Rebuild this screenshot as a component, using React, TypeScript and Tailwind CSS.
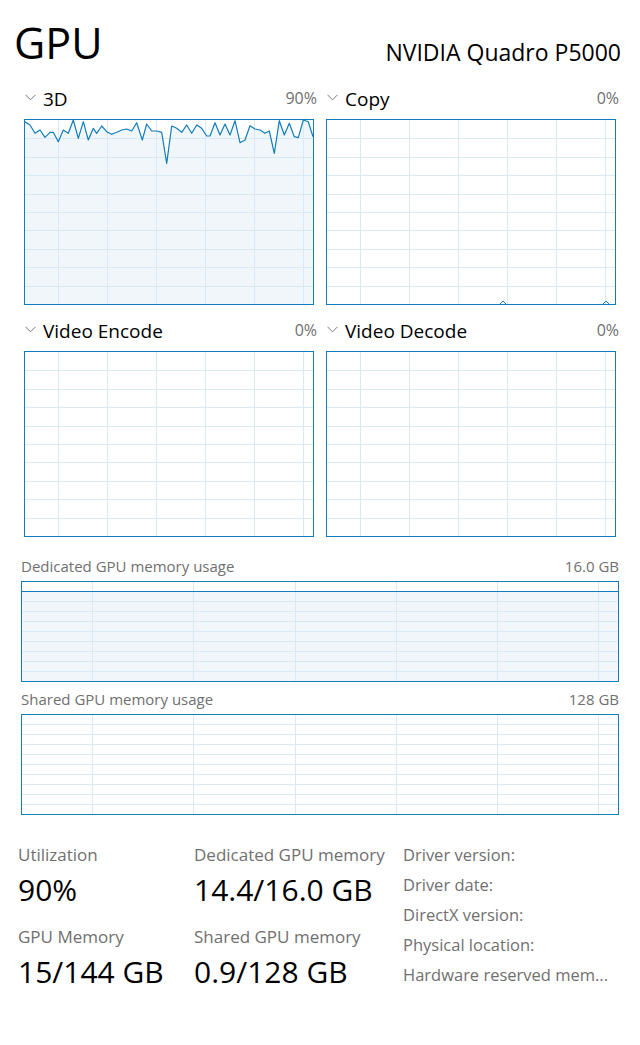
import React from "react";

const BLUE = "#117dbb";
const GRID = "#d9eaf4";
const FILL = "#f1f6fa";

const pts3d: [number, number][] = [
  [0, 1.7], [5, 5], [10, 13.3], [15, 10], [20, 17.3], [25, 12.3], [28.3, 12.3], [33.3, 21.7],
  [38.3, 10], [43.3, 13.3], [48.3, 0], [53.3, 18.3], [58.3, 1.7], [63.3, 20], [68.3, 8.3],
  [71.7, 13.3], [76.7, 6], [81.7, 11.7], [86.7, 14.3], [91.7, 12.3], [96.7, 10], [101.7, 9],
  [106.7, 11], [111.7, 2.7], [117.3, 20], [121.7, 4], [126.7, 11], [131.7, 11], [136.7, 12.3],
  [141.7, 43.3], [146.7, 6], [151.7, 8.3], [156.7, 12.3], [161.7, 5], [166.7, 13.3], [171.7, 5],
  [176.7, 8.3], [181.7, 16], [185, 16], [190, 2.7], [195, 15], [200, 4], [205, 15], [210, 0.7],
  [215, 22.7], [220, 20], [225, 5.7], [230, 9], [235, 10], [240, 13.3], [244.3, 11], [249.3, 33.3],
  [254.3, 0.7], [259.3, 15], [264.3, 3.3], [269.3, 16.7], [273.3, 17.7], [278.3, 0], [283.3, 1.7],
  [288, 16.7],
];

function Chevron() {
  return (
    <svg width="11" height="7" viewBox="0 0 11 7" className="shrink-0 -mt-[3px]">
      <path d="M0.5 0.8 L5.5 5.8 L10.5 0.8" fill="none" stroke="#777" strokeWidth="1" />
    </svg>
  );
}

function EngineChart({ line, blips }: { line?: [number, number][]; blips?: number[] }) {
  const w = 288;
  const h = 184;
  const vx = [33, 82, 131, 180, 229, 278];
  const hy = Array.from({ length: 9 }, (_, i) => Math.round((h * (i + 1)) / 10) + 0.5);
  const poly = line ? line.map(([x, y]) => `${x},${y}`).join(" ") : "";
  return (
    <div className="ml-[2px] w-[290px] h-[186px] border border-[#117dbb] bg-white">
      <svg width={w} height={h} className="block">
        {line && <polygon points={`0,${h} ${poly} ${w},${h}`} fill={FILL} />}
        {vx.map((x) => (
          <line key={x} x1={x + 0.5} x2={x + 0.5} y1={0} y2={h} stroke={GRID} />
        ))}
        {hy.map((y) => (
          <line key={y} x1={0} x2={w} y1={y} y2={y} stroke={GRID} />
        ))}
        {line && <polyline points={poly} fill="none" stroke={BLUE} strokeWidth="1.2" strokeLinejoin="round" />}
        {blips?.map((x) => (
          <path key={x} d={`M${x - 3} ${h} L${x} ${h - 3} L${x + 3} ${h}`} fill="none" stroke={BLUE} strokeWidth="1" />
        ))}
      </svg>
    </div>
  );
}

function Engine({ name, pct, line, blips }: { name: string; pct: string; line?: [number, number][]; blips?: number[] }) {
  return (
    <div className="flex flex-col">
      <div className="flex items-center h-[20px] pl-[3px] pr-[1px]">
        <Chevron />
        <span className="ml-[7px] text-[19px] leading-[20px] text-black">{name}</span>
        <span className="ml-auto text-[16px] leading-[20px] text-[#707070] -mt-[3px]">{pct}</span>
      </div>
      <div className="mt-[10px]">
        <EngineChart line={line} blips={blips} />
      </div>
    </div>
  );
}

function MemoryChart({ used }: { used?: boolean }) {
  const w = 596;
  const h = 99;
  const vx = [70, 171, 273, 374, 475, 576];
  const hy = Array.from({ length: 9 }, (_, i) => 9 + i * 10 + 0.5);
  return (
    <div className="w-[598px] h-[101px] border border-[#117dbb] bg-white">
      <svg width={w} height={h} className="block">
        {used && <rect x={0} y={9} width={w} height={h - 9} fill={FILL} />}
        {vx.map((x) => (
          <line key={x} x1={x + 0.5} x2={x + 0.5} y1={0} y2={h} stroke={GRID} />
        ))}
        {hy.map((y, i) => (
          <line key={y} x1={0} x2={w} y1={y} y2={y} stroke={used && i === 0 ? BLUE : GRID} />
        ))}
      </svg>
    </div>
  );
}

function MemorySection({ label, total, used }: { label: string; total: string; used?: boolean }) {
  return (
    <div className="pl-[21px] w-[619px]">
      <div className="flex items-center justify-between h-[18px] text-[15px] leading-[18px] text-[#707070]">
        <span>{label}</span>
        <span>{total}</span>
      </div>
      <div className="mt-[6px]">
        <MemoryChart used={used} />
      </div>
    </div>
  );
}

function Stat({ label, value }: { label: string; value: string }) {
  return (
    <div className="flex flex-col">
      <div className="text-[17px] leading-[20px] text-[#707070] whitespace-nowrap">{label}</div>
      <div className="mt-[7px] text-[30px] leading-[36px] text-black whitespace-nowrap">{value}</div>
    </div>
  );
}

export default function App() {
  const info = ["Driver version:", "Driver date:", "DirectX version:", "Physical location:", "Hardware reserved mem..."];
  return (
    <div className="w-[640px] h-[1045px] bg-white font-['Open_Sans',sans-serif] overflow-hidden">
      <header className="flex items-start justify-between pt-[21px] pl-[14px] pr-[19px]">
        <h1 className="text-[43px] leading-[44px] text-black">GPU</h1>
        <div className="mt-[20px] text-[23px] leading-[23px] text-black">NVIDIA Quadro P5000</div>
      </header>

      <section className="mt-[24px] pl-[22px] grid grid-cols-[296px_296px] gap-x-[6px] gap-y-[16px]">
        <Engine name="3D" pct="90%" line={pts3d} />
        <Engine name="Copy" pct="0%" blips={[176, 279]} />
        <Engine name="Video Encode" pct="0%" />
        <Engine name="Video Decode" pct="0%" />
      </section>

      <div className="mt-[20px]">
        <MemorySection label="Dedicated GPU memory usage" total="16.0 GB" used />
      </div>
      <div className="mt-[8px]">
        <MemorySection label="Shared GPU memory usage" total="128 GB" />
      </div>

      <section className="mt-[25px] pl-[18px] grid grid-cols-[176px_209px_1fr]">
        <div className="flex flex-col gap-[19px] pt-[5px]">
          <Stat label="Utilization" value="90%" />
          <Stat label="GPU Memory" value="15/144 GB" />
        </div>
        <div className="flex flex-col gap-[19px] pt-[5px]">
          <Stat label="Dedicated GPU memory" value="14.4/16.0 GB" />
          <Stat label="Shared GPU memory" value="0.9/128 GB" />
        </div>
        <div className="flex flex-col">
          {info.map((t) => (
            <div key={t} className="h-[30px] text-[16.5px] leading-[30px] text-[#707070] whitespace-nowrap">
              {t}
            </div>
          ))}
        </div>
      </section>
    </div>
  );
}
